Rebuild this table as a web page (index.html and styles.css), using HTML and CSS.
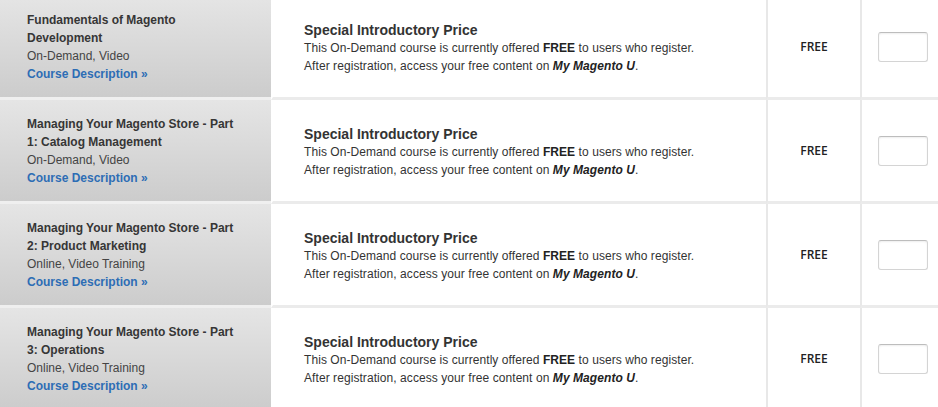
FILE: index.html
```html
<!DOCTYPE html>
<html>
<head>
<meta charset="utf-8">
<link rel="stylesheet" href="styles.css">
</head>
<body>
<div class="table">
  <div class="row">
    <div class="course">
      <div class="title">Fundamentals of Magento Development</div>
      <div class="type">On-Demand, Video</div>
      <a class="desc" href="#">Course Description »</a>
    </div>
    <div class="offer">
      <div class="heading">Special Introductory Price</div>
      <p>This On-Demand course is currently offered <b>FREE</b> to users who register.<br>After registration, access your free content on <b><i>My Magento U</i></b>.</p>
    </div>
    <div class="price">FREE</div>
    <div class="qty"><input class="qty-input" type="text"></div>
  </div>
  <div class="row">
    <div class="course">
      <div class="title">Managing Your Magento Store - Part 1: Catalog Management</div>
      <div class="type">On-Demand, Video</div>
      <a class="desc" href="#">Course Description »</a>
    </div>
    <div class="offer">
      <div class="heading">Special Introductory Price</div>
      <p>This On-Demand course is currently offered <b>FREE</b> to users who register.<br>After registration, access your free content on <b><i>My Magento U</i></b>.</p>
    </div>
    <div class="price">FREE</div>
    <div class="qty"><input class="qty-input" type="text"></div>
  </div>
  <div class="row">
    <div class="course">
      <div class="title">Managing Your Magento Store - Part 2: Product Marketing</div>
      <div class="type">Online, Video Training</div>
      <a class="desc" href="#">Course Description »</a>
    </div>
    <div class="offer">
      <div class="heading">Special Introductory Price</div>
      <p>This On-Demand course is currently offered <b>FREE</b> to users who register.<br>After registration, access your free content on <b><i>My Magento U</i></b>.</p>
    </div>
    <div class="price">FREE</div>
    <div class="qty"><input class="qty-input" type="text"></div>
  </div>
  <div class="row">
    <div class="course">
      <div class="title">Managing Your Magento Store - Part 3: Operations</div>
      <div class="type">Online, Video Training</div>
      <a class="desc" href="#">Course Description »</a>
    </div>
    <div class="offer">
      <div class="heading">Special Introductory Price</div>
      <p>This On-Demand course is currently offered <b>FREE</b> to users who register.<br>After registration, access your free content on <b><i>My Magento U</i></b>.</p>
    </div>
    <div class="price">FREE</div>
    <div class="qty"><input class="qty-input" type="text"></div>
  </div>
</div>
</body>
</html>
```
FILE: styles.css
```css
html, body {
  margin: 0;
  padding: 0;
  background: #fff;
}
body {
  font-family: "Liberation Sans", Arial, sans-serif;
  font-size: 12px;
  color: #333;
  overflow: hidden;
}
.table {
  margin-top: -4px;
  width: 938px;
}
.row {
  display: flex;
  height: 104px;
}
.row > div {
  border-bottom: 3px solid #ebebeb;
}
.row > .course {
  border-bottom-color: #efefef;
}
.course {
  width: 271px;
  box-sizing: border-box;
  padding: 0 29px 0 27px;
  background: linear-gradient(#e5e5e5, #cccccc);
  display: flex;
  flex-direction: column;
  justify-content: center;
  line-height: 18px;
}
.title {
  font-weight: bold;
  color: #363636;
}
.type {
  color: #444;
}
.desc {
  font-weight: bold;
  color: #2d6db5;
  text-decoration: none;
}
.offer {
  width: 462px;
  border-left: 2px solid #fff;
  padding-left: 31px;
  display: flex;
  flex-direction: column;
  justify-content: center;
}
.heading {
  font-size: 14px;
  font-weight: bold;
  color: #333;
  line-height: 18px;
  padding-top: 2px;
}
.offer p {
  margin: 0;
  line-height: 18px;
  color: #333;
  letter-spacing: 0.07px;
}
.offer p b {
  color: #222;
}
.price {
  width: 92px;
  border-left: 2px solid #e8e8e8;
  display: flex;
  align-items: center;
  justify-content: center;
  font-family: "Open Sans", "Liberation Sans", sans-serif;
  font-weight: 600;
  font-size: 12px;
  color: #222;
}
.qty {
  flex: 1;
  border-left: 2px solid #e8e8e8;
  display: flex;
  align-items: center;
  padding-left: 16px;
}
.qty-input {
  width: 50px;
  height: 30px;
  box-sizing: border-box;
  margin: 1px 0 0 0;
  padding: 0;
  border: 1px solid #d4d4d4;
  border-top-color: #bdbdbd;
  border-radius: 3px;
  box-shadow: inset 0 1px 2px rgba(0,0,0,0.07);
  background: #fff;
}
```
